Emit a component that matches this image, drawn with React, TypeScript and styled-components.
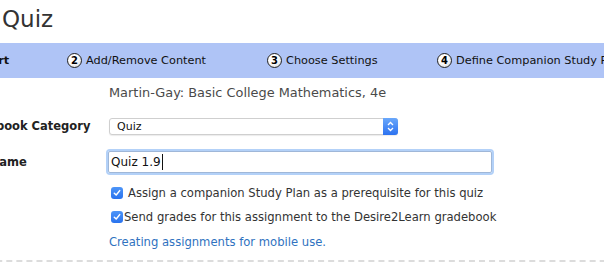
import styled, { createGlobalStyle } from 'styled-components'

const GlobalStyle = createGlobalStyle`
  html, body {
    margin: 0;
    padding: 0;
    background: #ffffff;
    overflow: hidden;
  }
  body {
    font-family: "DejaVu Sans", Verdana, sans-serif;
    color: #333333;
  }
`;

const Page = styled.div`
  width: 700px;
  margin-left: -44px;
`;

const Title = styled.h1`
  margin: 0;
  padding: 5px 0 0 46px;
  height: 43px;
  box-sizing: border-box;
  font-size: 23px;
  line-height: 28px;
  font-weight: normal;
  color: #333;
`;

const StepBar = styled.div`
  display: grid;
  grid-template-columns: 111px 200px 170px 1fr;
  align-items: center;
  height: 35px;
  background: #afc4f6;
  white-space: nowrap;
`;

const Step = styled.div<{ $current?: boolean }>`
  display: flex;
  align-items: center;
  gap: 4px;
  padding-left: ${p => (p.$current ? '2px' : '0')};
  font-size: 11.3px;
  font-weight: ${p => (p.$current ? 'bold' : 'normal')};
  color: #111;
`;

const StepNum = styled.span`
  display: inline-flex;
  align-items: center;
  justify-content: center;
  width: 13px;
  height: 13px;
  border-radius: 50%;
  border: 1.5px solid #222;
  background: radial-gradient(circle at 40% 35%, #ffffff 40%, #d0d0d0 100%);
  font-size: 10px;
  font-weight: bold;
  color: #000;
  box-sizing: content-box;
`;

const Form = styled.div`
  display: grid;
  grid-template-columns: 151px 1fr;
  padding: 5px 0 0 1px;
  row-gap: 16px;
`;

const Label = styled.div`
  display: flex;
  align-items: center;
  font-size: 11.5px;
  font-weight: bold;
  color: #222;
  white-space: nowrap;
`;

const Value = styled.div<{ $size?: number }>`
  display: flex;
  align-items: center;
  min-height: 18px;
  padding-left: 1px;
  font-size: ${p => p.$size ?? 12}px;
  color: #4a4a4a;
  white-space: nowrap;
`;

const SelectBox = styled.div`
  position: relative;
  display: flex;
  align-items: center;
  width: 289px;
  height: 17px;
  box-sizing: border-box;
  padding-left: 7px;
  border: 1px solid #cfcfcf;
  border-radius: 3px;
  background: #fff;
  box-shadow: 0 1px 1px rgba(0, 0, 0, 0.08);
  font-size: 11px;
  color: #111;
`;

const SelectArrows = styled.span`
  position: absolute;
  right: -1px;
  top: -1px;
  bottom: -1px;
  width: 15px;
  display: flex;
  align-items: center;
  justify-content: center;
  border-radius: 0 3px 3px 0;
  background: linear-gradient(#6aa8fb, #2c72f0);
`;

const TextField = styled.div`
  display: flex;
  align-items: center;
  width: 384px;
  height: 22px;
  margin-left: -1px;
  box-sizing: border-box;
  padding-left: 2px;
  border: 1px solid #9fb7d8;
  box-shadow: 0 0 0 2px #b3d1f8;
  border-radius: 2px;
  font-size: 12px;
  color: #111;
`;

const Caret = styled.span`
  display: inline-block;
  width: 1px;
  height: 16px;
  margin-left: 1px;
  background: #111;
`;

const Options = styled.div`
  display: flex;
  flex-direction: column;
  gap: 8px;
  padding: 12px 0 0 153px;
`;

const CheckRow = styled.label<{ $gap: number }>`
  display: flex;
  align-items: center;
  gap: ${p => p.$gap}px;
  height: 16px;
  padding-left: 2px;
  font-size: 11.6px;
  color: #333;
  white-space: nowrap;
`;

const CheckBox = styled.span`
  display: inline-flex;
  align-items: center;
  justify-content: center;
  width: 12px;
  height: 12px;
  border-radius: 3px;
  background: linear-gradient(#4d95f8, #2a73ee);
`;

const HelpLink = styled.a`
  display: block;
  height: 16px;
  line-height: 16px;
  margin-top: 1px;
  font-size: 11.6px;
  color: #2f72c0;
  text-decoration: none;
`;

const Divider = styled.div`
  margin-top: 10px;
  border-top: 2px dashed #dcdcdc;
`;

const Check = () => (
  <svg width="8" height="8" viewBox="0 0 8 8">
    <path d="M1.3 4.2 L3.2 6 L6.7 1.6" fill="none" stroke="#fff" strokeWidth="1.5" strokeLinecap="round" strokeLinejoin="round" />
  </svg>
);

const steps = [
  { n: 1, label: 'Start', current: true },
  { n: 2, label: 'Add/Remove Content' },
  { n: 3, label: 'Choose Settings' },
  { n: 4, label: 'Define Companion Study Plan' },
];

export default function App() {
  return (
    <>
      <GlobalStyle />
      <Page>
        <Title>Quiz</Title>
        <StepBar>
          {steps.map(s => (
            <Step key={s.n} $current={s.current}>
              <StepNum>{s.n}</StepNum>
              {s.label}
            </Step>
          ))}
        </StepBar>
        <Form>
          <Label>Book</Label>
          <Value $size={12.9}>Martin-Gay: Basic College Mathematics, 4e</Value>

          <Label>Gradebook Category</Label>
          <Value>
            <SelectBox>
              Quiz
              <SelectArrows>
                <svg width="7" height="11" viewBox="0 0 7 11">
                  <path d="M1 4 L3.5 1.5 L6 4 M1 7 L3.5 9.5 L6 7" fill="none" stroke="#fff" strokeWidth="1.3" />
                </svg>
              </SelectArrows>
            </SelectBox>
          </Value>

          <Label>Quiz Name</Label>
          <Value>
            <TextField>
              Quiz 1.9<Caret />
            </TextField>
          </Value>
        </Form>
        <Options>
          <CheckRow $gap={5}>
            <CheckBox><Check /></CheckBox>
            Assign a companion Study Plan as a prerequisite for this quiz
          </CheckRow>
          <CheckRow $gap={1}>
            <CheckBox><Check /></CheckBox>
            Send grades for this assignment to the Desire2Learn gradebook
          </CheckRow>
          <HelpLink href="#">Creating assignments for mobile use.</HelpLink>
        </Options>
        <Divider />
      </Page>
    </>
  )
}
